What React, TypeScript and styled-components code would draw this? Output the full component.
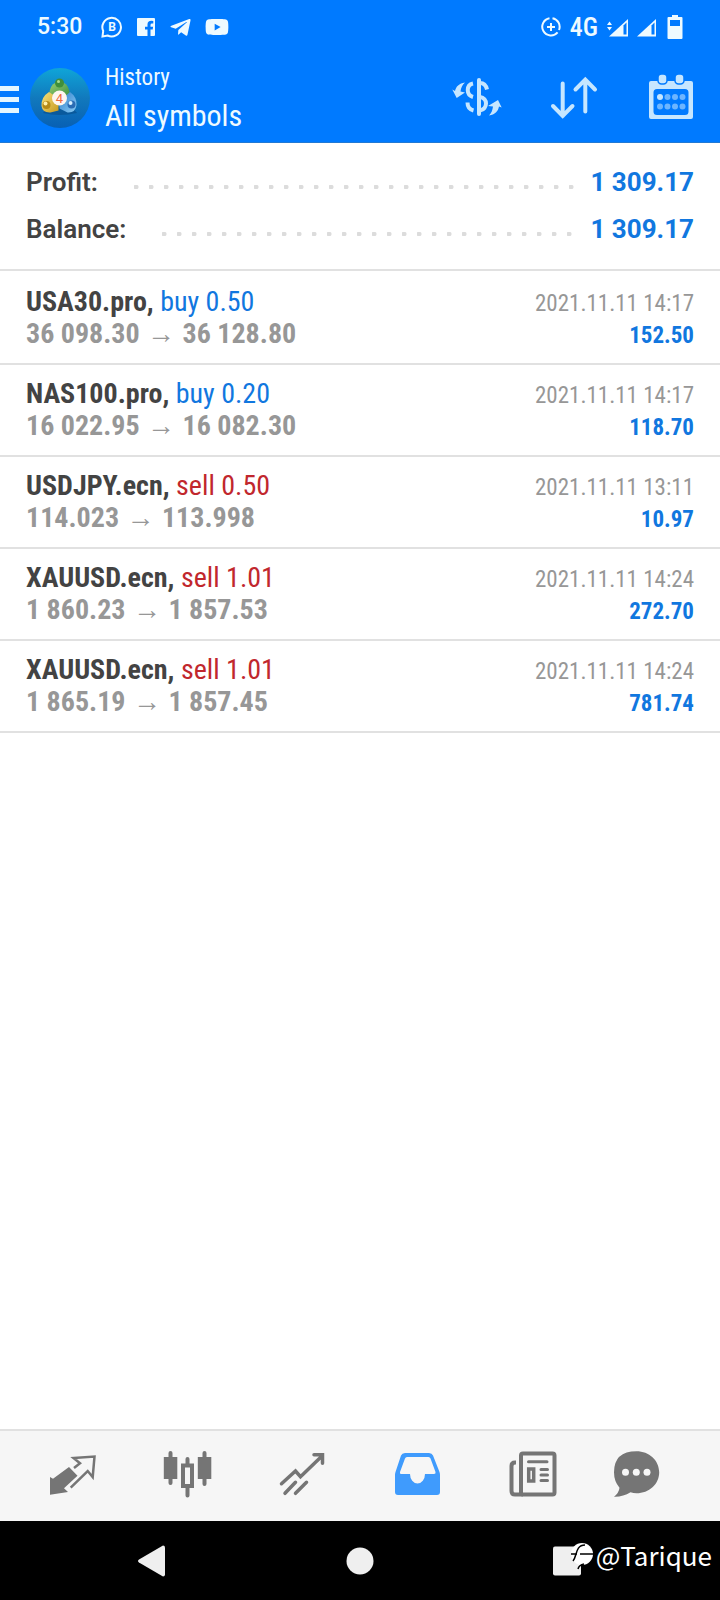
import React from "react";
import styled, { createGlobalStyle } from "styled-components";
import { FaTelegramPlane, FaYoutube } from "react-icons/fa";

const condensed = '"Roboto Condensed", Roboto, sans-serif';
const color = {
  bar: "#007aff",
  barIcon: "#c6e6ff",
  buy: "#1177df",
  sell: "#c1272d",
  ink: "#434343",
  muted: "#979797",
  line: "#e1e1e1",
  tab: "#757575",
  tabActive: "#3f9bfd",
  key: "#efefef",
};

const GlobalStyle = createGlobalStyle`
  *, *::before, *::after { box-sizing: border-box; }
  body { margin: 0; background: #fff; font-family: Roboto, sans-serif; }
  button { margin: 0; padding: 0; border: 0; background: none; color: inherit; font: inherit; cursor: pointer; }
  svg { display: block; }
`;

const Page = styled.div`
  display: flex;
  flex-direction: column;
  min-height: 100vh;
`;

const Header = styled.header`
  background: ${color.bar};
  border-bottom: 1px solid #2179d4;
  color: #eefaff;
`;

const StatusBar = styled.div`
  display: flex;
  align-items: center;
  justify-content: space-between;
  height: 54px;
  padding: 0 37px;
`;

const StatusGroup = styled.div<{ $gap: number }>`
  display: flex;
  align-items: center;
  gap: ${(p) => p.$gap}px;
`;

const Clock = styled.time`
  font-size: 23px;
  line-height: 28px;
  font-weight: 500;
  margin-right: 6px;
`;

const Network = styled.span`
  font-family: ${condensed};
  font-size: 26px;
  line-height: 28px;
  font-weight: 500;
`;

const AppBar = styled.div`
  display: flex;
  align-items: center;
  height: 88px;
  padding-right: 24px;
`;

const MenuButton = styled.button`
  display: flex;
  align-items: center;
  width: 30px;
  height: 60px;
  padding-top: 4px;
`;

const Titles = styled.div`
  flex: 1;
  padding-left: 15px;
  font-family: ${condensed};
`;

const Subtitle = styled.div`
  font-size: 23px;
  line-height: 36px;
`;

const Title = styled.h1`
  margin: 0;
  font-size: 30px;
  line-height: 40px;
  font-weight: 400;
`;

const Actions = styled.div`
  display: flex;
  gap: 47px;
  color: ${color.barIcon};
`;

const Main = styled.main`
  flex: 1;
`;

const Summary = styled.dl`
  margin: 0;
  padding: 15px 26px 17px;
  border-bottom: 2px solid ${color.line};
`;

const SummaryRow = styled.div`
  display: flex;
  align-items: center;
  height: 47px;
  font-size: 26px;
  line-height: 30px;
`;

const SummaryLabel = styled.dt`
  font-weight: 600;
  color: ${color.ink};
`;

const Leader = styled.div`
  flex: 1;
  height: 4px;
  margin: 10px 14px 0 36px;
  background: radial-gradient(circle at 2px 2px, #dcdcdc 2px, transparent 3px) 0 0 / 15px 4px repeat-x;
`;

const SummaryValue = styled.dd`
  margin: 0;
  font-weight: 700;
  color: ${color.buy};
`;

const Deals = styled.ul`
  margin: 0;
  padding: 2px 0 0;
  list-style: none;
  font-family: ${condensed};
`;

const Deal = styled.li`
  height: 92px;
  padding: 11px 26px 0;
  border-bottom: 2px solid ${color.line};
`;

const DealLine = styled.div`
  display: flex;
  align-items: baseline;
  justify-content: space-between;
  height: 32px;
  font-size: 28px;
  line-height: 36px;
  white-space: pre;
`;

const Instrument = styled.strong`
  font-weight: 700;
  color: ${color.ink};
`;

const Side = styled.span<{ $side: "buy" | "sell" }>`
  color: ${(p) => color[p.$side]};
`;

const Prices = styled.span`
  font-weight: 700;
  color: ${color.muted};
`;

const Arrow = styled.span`
  margin: 0 1px;
  font-family: "Liberation Sans", sans-serif;
  font-weight: 400;
`;

const DealTime = styled.time`
  font-size: 23px;
  color: ${color.muted};
`;

const DealProfit = styled.span`
  font-size: 23px;
  font-weight: 700;
  color: ${color.buy};
`;

const Tabs = styled.nav`
  display: grid;
  grid-template-columns: repeat(5, 1fr) 92px;
  align-items: center;
  height: 92px;
  padding: 0 38px 4px 15px;
  background: #f6f6f6;
  border-top: 2px solid ${color.line};
`;

const Tab = styled.button<{ $active?: boolean }>`
  display: flex;
  justify-content: center;
  color: ${(p) => (p.$active ? color.tabActive : color.tab)};
`;

const SystemBar = styled.footer`
  position: relative;
  display: flex;
  align-items: center;
  justify-content: center;
  gap: 176px;
  height: 79px;
  background: #000;
  color: ${color.key};
`;

const Watermark = styled.div`
  position: absolute;
  right: 8px;
  top: 14px;
  display: flex;
  align-items: center;
  gap: 3px;
  color: #fff;
  font-family: "Noto Sans CJK SC", sans-serif;
  font-size: 26px;
  line-height: 40px;
`;

const BusinessChatIcon = () => (
  <svg width="22" height="22" viewBox="0 0 22 22" fill="none" stroke="currentColor" strokeWidth="2">
    <path d="M1.500 20.500 2.200 15A9.300 9.300 0 1 1 6.600 19.500Z" />
    <text x="11" y="15" textAnchor="middle" fontFamily="Roboto" fontSize="12" fontWeight="700" fill="currentColor" stroke="none">B</text>
  </svg>
);

const SocialIcon = () => (
  <svg width="20" height="20" viewBox="0 0 20 20" fill="currentColor">
    <path d="M2 1h16q1 0 1 1v16q0 1-1 1h-3.500v-6.500h2.200l.4-2.800h-2.600V8q0-1.400 1.500-1.400h1.300V4q-5.800-1-5.800 3.500v2.200H9v2.800h2.500V19H2q-1 0-1-1V2q0-1 1-1Z" />
  </svg>
);

const DataSaverIcon = () => (
  <svg width="20" height="20" viewBox="0 0 20 20" fill="none" stroke="currentColor" strokeWidth="2">
    <path d="M11.500 1.200A8.700 8.700 0 0 1 18 13M16.600 15.400A8.700 8.700 0 1 1 8.500 1.200M10 6v8M6 10h8" />
  </svg>
);

const SignalIcon = ({ data }: { data?: boolean }) => (
  <svg width={data ? 21 : 19} height="19" viewBox={data ? "-2 0 21 19" : "0 0 19 19"}>
    <path d="M0 18.500 19 1V18.500Z" fill="currentColor" />
    <path d="M14.500 7.500 17.500 4.600V16.500H14.500Z" fill={color.bar} />
    {data && <path d="M-2 7 .5 3.500 3 7ZM-2 9 .5 12.500 3 9Z" fill="currentColor" />}
  </svg>
);

const BatteryIcon = () => (
  <svg width="18" height="24" viewBox="-2 0 18 24">
    <path d="M5 0h6v2h3.500q1 0 1 1v20q0 1-1 1h-13q-1 0-1-1V3q0-1 1-1H5Z" fill="currentColor" />
    <path d="M3 5h10v6H3Z" fill={color.bar} />
  </svg>
);

const MenuIcon = () => (
  <svg width="19" height="28" viewBox="0 0 19 28" fill="#e4f6ff">
    <path d="M0 0h19v5H0ZM0 11h19v5H0ZM0 22h19v5H0Z" />
  </svg>
);

const BrandLogo = () => (
  <svg width="60" height="60" viewBox="0 0 60 60">
    <defs>
      <linearGradient id="disc" x1="0" y1="0" x2="0" y2="1">
        <stop offset="0" stopColor="#0fa5d8" />
        <stop offset="0.5" stopColor="#1179bd" />
        <stop offset="1" stopColor="#0860b4" />
      </linearGradient>
      <linearGradient id="green" x1="0" y1="0" x2="1" y2="1">
        <stop offset="0" stopColor="#9ccf72" />
        <stop offset="1" stopColor="#2f8a3c" />
      </linearGradient>
      <linearGradient id="gold" x1="0" y1="0" x2="1" y2="1">
        <stop offset="0" stopColor="#f7e27c" />
        <stop offset="1" stopColor="#c79a1e" />
      </linearGradient>
      <linearGradient id="sky" x1="0" y1="0" x2="1" y2="1">
        <stop offset="0" stopColor="#2f7fcb" />
        <stop offset="1" stopColor="#8accf5" />
      </linearGradient>
    </defs>
    <circle cx="30" cy="30" r="30" fill="url(#disc)" />
    <path d="M13 45q16 4 34 0l-5-6H18Z" fill="#06457f" opacity="0.5" />
    <path d="M19 30q0-16 10.500-16T40 30l-4 2H23Z" fill="url(#green)" />
    <path d="M19 24q-8 5-7.500 14 1 7 9 6.500l8-2V28l-5-1Z" fill="url(#gold)" />
    <path d="M40 24q7 5 6.500 13-1 8-9 7.500l-8-4V36l6-8Z" fill="url(#sky)" />
    <circle cx="29.500" cy="15" r="4.500" fill="#3f8f3a" />
    <circle cx="28.500" cy="13.500" r="1.500" fill="#a9dc8c" />
    <circle cx="16.500" cy="37" r="4" fill="#b58a17" />
    <circle cx="15.500" cy="35.500" r="2" fill="#fff0a8" />
    <circle cx="41.500" cy="36.500" r="4" fill="#2a6cb4" />
    <circle cx="40.500" cy="35" r="2" fill="#d5efff" />
    <circle cx="29.500" cy="30" r="7.500" fill="#fdf6ef" />
    <text x="29.500" y="34.500" textAnchor="middle" fontFamily="Roboto" fontSize="13" fill="#ee6c3a">4</text>
  </svg>
);

const CurrencyIcon = () => (
  <svg width="50" height="48" viewBox="0 0 50 48" fill="none" stroke="currentColor" strokeWidth="4">
    <path d="M27 6v34" strokeLinecap="round" />
    <path d="M21 9.500C14 11 14 21 21 23M28 9c4 0 6 2 7 6.500M28 23c8 1 8 12 0 13.500M15.500 28.500c0 4 2 7 6 8" />
    <path d="M13 8.500C7 9.500 4 12.500 3 17L.3 15.500 4.700 24 13 18.500 8.500 17.500C9 14 10 11 13 8.500ZM37 41.500c6-1 9-4 10-9l2.700 1L46 26l-10 6 5 .5c-.5 3.500-1.500 6.500-4 9Z" fill="currentColor" stroke="none" />
  </svg>
);

const SortIcon = () => (
  <svg width="50" height="48" viewBox="0 0 50 48" fill="none" stroke="currentColor" strokeWidth="4" strokeLinecap="round">
    <path d="M13.700 9.500V42M4 32l9.700 10L23.500 32M36.300 37.500V6M26.500 15.500l9.800-10 9.700 10" />
  </svg>
);

const CalendarIcon = () => (
  <svg width="50" height="48" viewBox="0 0 50 48" fill="currentColor">
    <path fillRule="evenodd" d="M5 7h40q2 0 2 2v34q0 2-2 2H5q-2 0-2-2V9q0-2 2-2ZM11 15q-3.500 0-3.500 3.500v19q0 3.500 3.500 3.500h28q3.500 0 3.500-3.500v-19q0-3.500-3.500-3.500Z" />
    <rect x="12" y="0" width="9" height="10" rx="3.500" stroke={color.bar} strokeWidth="1.500" />
    <rect x="29" y="0" width="9" height="10" rx="3.500" stroke={color.bar} strokeWidth="1.500" />
    <circle cx="14" cy="23" r="3" />
    <g opacity="0.550">
      {[21.5, 29, 36.5].map((x) => <circle key={x} cx={x} cy="23" r="3" />)}
      {[14, 21.5, 29, 36.5].map((x) => <circle key={x} cx={x} cy="32.500" r="3" />)}
    </g>
  </svg>
);

const TabIcon = ({ children }: { children: React.ReactNode }) => (
  <svg width="49" height="48" viewBox="0 0 49 48" fill="none" stroke="currentColor" strokeWidth="4">
    {children}
  </svg>
);

const tabs = [
  {
    label: "Quotes",
    icon: (
      <>
        <path d="M2 27l3 1.700L21 17l8.500 8.700L16 38.300 20 42 2 44.700Z" fill="currentColor" stroke="none" />
        <path d="M26 18l6-4.700L25.500 8 46.500 6.500 44.700 27l-5-6L22.700 37.700" strokeWidth="2.500" />
      </>
    ),
  },
  {
    label: "Charts",
    icon: (
      <>
        <path d="M7.500 3v30M41.500 3v31M24.500 9v6M24.500 37v8.500" strokeLinecap="round" />
        <path d="M.8 7h13.500v22H.8ZM34.800 7h13.500v22H34.800Z" fill="currentColor" stroke="none" />
        <path d="M20 15.500h9v20.500h-9Z" />
      </>
    ),
  },
  {
    label: "Trade",
    icon: <path d="M3.500 33.700 17.500 21l5 5.700L44 6M36 4.700h8.500v8.500M7 43.300l10.500-11M17.500 43.300l11-11" strokeWidth="3.500" strokeLinecap="round" />,
  },
  {
    label: "History",
    active: true,
    icon: (
      <path
        fill="currentColor"
        stroke="none"
        fillRule="evenodd"
        d="M12 3h24q3 0 4 2.500L46.500 22q.5 1.500.5 3v17q0 3-3 3H5q-3 0-3-3V25q0-1.500.5-3L8 5.500Q9 3 12 3ZM14 7q-1.500 0-2 1.500L7 22q-.5 2 1 2h9a7.500 9.500 0 0 0 15 0h9q2 0 1.500-2L37.500 8.500Q37 7 35.500 7Z"
      />
    ),
  },
  {
    label: "News",
    icon: (
      <>
        <rect x="13" y="3.500" width="33.500" height="41" rx="2" />
        <path d="M8 12.500H7Q3.500 12.500 3.500 16v25q0 3.500 3.500 3.500h8" />
        <path d="M20.500 11.700h18.500M33 19.500h6.500M33 25h6.500M33 30.500h6.500" strokeWidth="3" strokeLinecap="round" />
        <path d="M20.700 19h5v12h-5Z" strokeWidth="3.500" />
      </>
    ),
  },
  {
    label: "Messages",
    icon: (
      <g stroke="none">
        <path d="M24.500 1.300c12.500 0 22.700 9 22.700 21S37 43.300 24.500 43.300q-3 0-6-1Q11 47 2 46.700q5-4 5.500-9Q2 31.500 2 22.300 2 1.300 24.500 1.300Z" fill="currentColor" />
        <g fill="#f6f6f6">
          <circle cx="13.500" cy="22.300" r="3.500" />
          <circle cx="24.300" cy="22.300" r="3.500" />
          <circle cx="35" cy="22.300" r="3.500" />
        </g>
      </g>
    ),
  },
];

const deals: { symbol: string; side: "buy" | "sell"; lots: string; open: string; close: string; time: string; profit: string }[] = [
  { symbol: "USA30.pro", side: "buy", lots: "0.50", open: "36 098.30", close: "36 128.80", time: "2021.11.11 14:17", profit: "152.50" },
  { symbol: "NAS100.pro", side: "buy", lots: "0.20", open: "16 022.95", close: "16 082.30", time: "2021.11.11 14:17", profit: "118.70" },
  { symbol: "USDJPY.ecn", side: "sell", lots: "0.50", open: "114.023", close: "113.998", time: "2021.11.11 13:11", profit: "10.97" },
  { symbol: "XAUUSD.ecn", side: "sell", lots: "1.01", open: "1 860.23", close: "1 857.53", time: "2021.11.11 14:24", profit: "272.70" },
  { symbol: "XAUUSD.ecn", side: "sell", lots: "1.01", open: "1 865.19", close: "1 857.45", time: "2021.11.11 14:24", profit: "781.74" },
];

const totals = [
  { label: "Profit:", value: "1 309.17" },
  { label: "Balance:", value: "1 309.17" },
];

export default function App() {
  return (
    <Page>
      <GlobalStyle />
      <Header>
        <StatusBar>
          <StatusGroup $gap={13}>
            <Clock>5:30</Clock>
            <BusinessChatIcon />
            <SocialIcon />
            <FaTelegramPlane size={23} />
            <FaYoutube size={24} />
          </StatusGroup>
          <StatusGroup $gap={9}>
            <DataSaverIcon />
            <Network>4G</Network>
            <SignalIcon data />
            <SignalIcon />
            <BatteryIcon />
          </StatusGroup>
        </StatusBar>
        <AppBar>
          <MenuButton aria-label="Menu"><MenuIcon /></MenuButton>
          <BrandLogo />
          <Titles>
            <Subtitle>History</Subtitle>
            <Title>All symbols</Title>
          </Titles>
          <Actions>
            <button aria-label="Currency"><CurrencyIcon /></button>
            <button aria-label="Sort"><SortIcon /></button>
            <button aria-label="Period"><CalendarIcon /></button>
          </Actions>
        </AppBar>
      </Header>
      <Main>
        <Summary>
          {totals.map((t) => (
            <SummaryRow key={t.label}>
              <SummaryLabel>{t.label}</SummaryLabel>
              <Leader />
              <SummaryValue>{t.value}</SummaryValue>
            </SummaryRow>
          ))}
        </Summary>
        <Deals>
          {deals.map((d) => (
            <Deal key={d.open}>
              <DealLine>
                <span>
                  <Instrument>{d.symbol},</Instrument> <Side $side={d.side}>{d.side} {d.lots}</Side>
                </span>
                <DealTime>{d.time}</DealTime>
              </DealLine>
              <DealLine>
                <Prices>{d.open} <Arrow>→</Arrow> {d.close}</Prices>
                <DealProfit>{d.profit}</DealProfit>
              </DealLine>
            </Deal>
          ))}
        </Deals>
      </Main>
      <Tabs>
        {tabs.map((t) => (
          <Tab key={t.label} aria-label={t.label} $active={t.active}>
            <TabIcon>{t.icon}</TabIcon>
          </Tab>
        ))}
      </Tabs>
      <SystemBar>
        <button aria-label="Back">
          <svg width="32" height="32" viewBox="0 0 32 32" fill={color.key}>
            <path d="M27 .5q2 0 2 2v27q0 2-2 2L3 17.500q-2-1.500 0-3Z" />
          </svg>
        </button>
        <button aria-label="Home">
          <svg width="32" height="32" viewBox="0 0 32 32" fill={color.key}>
            <circle cx="16" cy="16" r="13.500" />
          </svg>
        </button>
        <button aria-label="Recent apps">
          <svg width="32" height="32" viewBox="0 0 32 32" fill={color.key}>
            <rect x="1" y="1.500" width="28" height="29" rx="2" />
          </svg>
        </button>
        <Watermark>
          <svg width="22" height="30" viewBox="0 0 22 30">
            <circle cx="11" cy="14" r="11" fill="#fff" />
            <path d="M2 21C6 17 4 5 14 5M0 14H6M9 14h13M7 29q1-4 6-5" fill="none" stroke="#000" strokeWidth="1.500" />
          </svg>
          @Tarique
        </Watermark>
      </SystemBar>
    </Page>
  );
}
